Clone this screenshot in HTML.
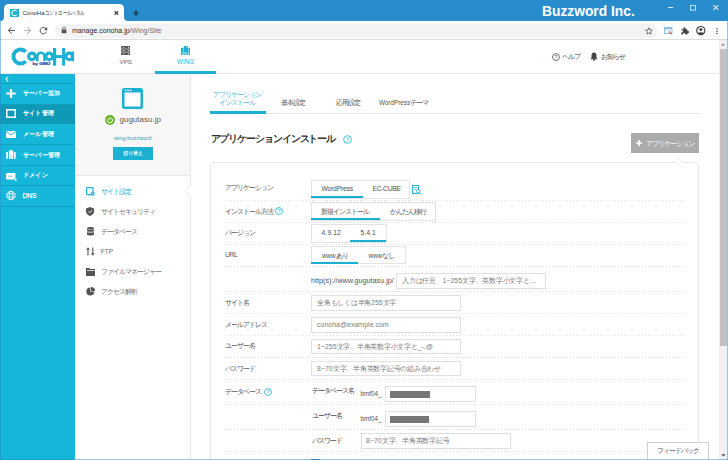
<!DOCTYPE html>
<html><head><meta charset="utf-8">
<style>
*{margin:0;padding:0;box-sizing:border-box}
html,body{width:728px;height:460px;overflow:hidden;background:#fff;font-family:"Liberation Sans",sans-serif;color:#444}
.a{position:absolute;white-space:nowrap}
.t6{font-size:7px;line-height:7px;letter-spacing:-1px}
i.l{letter-spacing:0}
i.l{font-style:normal;-webkit-text-stroke:0;font-size:6.3px}
svg{position:absolute;overflow:visible}
.dot{position:absolute;height:1px;background-image:linear-gradient(to right,#dedede 50%,transparent 50%);background-size:3px 1px}
.box{position:absolute;border:1px solid #e3e3e3;background:#fff}
.inp{position:absolute;border:1px solid #e0e0e0;background:#fff}
.ph{color:#808080;font-size:7px;line-height:7px;letter-spacing:-0.25px}
.ph i.l{font-size:7px}
</style></head><body>
<!-- ===== browser chrome ===== -->
<div class="a" style="left:0;top:0;width:728px;height:21px;background:#288dcd"></div>
<!-- tab -->
<div class="a" style="left:4px;top:4.3px;width:120px;height:17px;background:#fff;border-radius:4.5px 4.5px 0 0"></div>
<div class="a" style="left:0;top:15px;width:4px;height:6px;background:#fff"></div>
<div class="a" style="left:0;top:12px;width:4px;height:8.7px;background:#288dcd;border-radius:0 0 4px 0"></div>
<div class="a" style="left:124px;top:15px;width:5px;height:6px;background:#fff"></div>
<div class="a" style="left:124px;top:12px;width:5px;height:8.7px;background:#288dcd;border-radius:0 0 0 4px"></div>
<div class="a" style="left:10px;top:9px;width:9px;height:8px;background:#1eb3d5"></div>
<svg style="left:10px;top:9px" width="9" height="8" viewBox="0 0 9 8"><path d="M6.6 2.2A2.7 2.7 0 1 0 6.6 5.8" fill="none" stroke="#fff" stroke-width="1.1"/></svg>
<div class="a t6" style="left:22.5px;top:10px;color:#333;font-size:6px;letter-spacing:0">ConoHa<span style="display:inline-block;transform:scaleX(0.76);transform-origin:0 0;letter-spacing:-0.2px">コントロールパネル</span></div>
<svg style="left:114px;top:11px" width="5" height="4" viewBox="0 0 5 4"><path d="M0.6 0.3L4.2 3.7M4.2 0.3L0.6 3.7" stroke="#444" stroke-width="1.2"/></svg>
<svg style="left:132.5px;top:10px" width="6" height="6" viewBox="0 0 6 6"><path d="M3 0V6M0.3 3H5.7" stroke="#222" stroke-width="1.1"/></svg>
<div class="a" style="left:542px;top:3px;color:#fff;font-weight:bold;font-size:13.8px;line-height:18px">Buzzword Inc.</div>
<svg style="left:667.5px;top:6.8px" width="6" height="2"><path d="M0 0.5H5.2" stroke="#d6e7f4" stroke-width="1"/></svg>
<svg style="left:690px;top:5px" width="6" height="6"><rect x="0.5" y="0.5" width="5" height="4.6" fill="none" stroke="#d6e7f4" stroke-width="0.9"/></svg>
<svg style="left:713.3px;top:5px" width="6" height="5"><path d="M0.3 0.2L5.3 4.8M5.3 0.2L0.3 4.8" stroke="#e4eef7" stroke-width="1.1"/></svg>
<!-- toolbar -->
<div class="a" style="left:0;top:20.7px;width:728px;height:18.3px;background:#fff"></div>
<div class="a" style="left:0;top:39px;width:728px;height:1px;background:#dcdcdc"></div>
<svg style="left:7px;top:26px" width="9" height="9" viewBox="0 0 9 9"><path d="M1.3 4.4H7.9M4.6 1.2L1.3 4.4L4.6 7.6" fill="none" stroke="#555" stroke-width="1"/></svg>
<svg style="left:23px;top:26px" width="9" height="9" viewBox="0 0 9 9"><path d="M1.1 4.4H7.7M4.4 1.2L7.7 4.4L4.4 7.6" fill="none" stroke="#b5b5b5" stroke-width="1"/></svg>
<svg style="left:39px;top:26px" width="9" height="9" viewBox="0 0 9 9"><path d="M7.2 3.2A3.2 3.2 0 1 0 7.4 5.6" fill="none" stroke="#555" stroke-width="1"/><path d="M8.2 1V4.2H5Z" fill="#555"/></svg>
<div class="a" style="left:55px;top:23.5px;width:602px;height:14px;background:#f1f3f4;border-radius:7px"></div>
<svg style="left:61px;top:26.8px" width="6" height="7" viewBox="0 0 6 7"><path d="M1.6 3V2A1.4 1.4 0 0 1 4.4 2V3" fill="none" stroke="#555" stroke-width="0.9"/><rect x="0.6" y="2.8" width="4.8" height="3.4" rx="0.3" fill="#555"/></svg>
<div class="a" style="left:72px;top:26.5px;font-size:7px;line-height:8px;color:#2a2a2a">manage.conoha.jp<span style="color:#707070">/Wing/Site</span></div>
<svg style="left:645px;top:26.8px" width="8" height="8" viewBox="0 0 10 10"><path d="M5 0.9L6.2 3.7L9.2 3.9L6.9 5.9L7.6 8.9L5 7.3L2.4 8.9L3.1 5.9L0.8 3.9L3.8 3.7Z" fill="none" stroke="#555" stroke-width="1"/></svg>
<svg style="left:664px;top:27px" width="9" height="8" viewBox="0 0 9 8"><rect x="0.4" y="0.4" width="7.6" height="6.2" fill="#e3f0fb" stroke="#7fb6e6" stroke-width="0.8"/><rect x="0.4" y="0.4" width="7.6" height="1.8" fill="#8bbde9"/><path d="M5.2 4.6L7.8 7.2" stroke="#e8402a" stroke-width="1.1"/></svg>
<svg style="left:680.8px;top:27px" width="8" height="8" viewBox="0 0 8 8"><path d="M0.3 2.2H2.4V1.3A1.1 1.1 0 0 1 4.6 1.3V2.2H6.4V4H7A1.1 1.1 0 0 1 7 6.2H6.4V7.6H4.2V7A1.1 1.1 0 0 0 2 7V7.6H0.3V5.4H0.9A1.1 1.1 0 0 0 0.9 3.2H0.3Z" fill="#444"/></svg>
<svg style="left:696px;top:25.8px" width="10" height="10" viewBox="0 0 10 10"><circle cx="4.8" cy="4.6" r="4.1" fill="none" stroke="#444" stroke-width="1.2"/><circle cx="4.8" cy="3.5" r="1.5" fill="#444"/><path d="M2.2 7.2C2.8 5.8 6.8 5.8 7.4 7.2L6.5 8.2H3.1Z" fill="#444"/></svg>
<svg style="left:716px;top:27.5px" width="2" height="7"><circle cx="1" cy="0.8" r="0.75" fill="#444"/><circle cx="1" cy="3.2" r="0.75" fill="#444"/><circle cx="1" cy="5.6" r="0.75" fill="#444"/></svg>

<!-- ===== page header ===== -->
<div class="a" style="left:0;top:73px;width:720px;height:1px;background:#e6e6e6"></div>
<svg style="left:10px;top:44px" width="70" height="26" viewBox="0 0 70 26"><path d="M15.70 7.82A7.0 7.0 0 1 0 15.70 17.18" fill="none" stroke="#1cb1d2" stroke-width="3.9"/><circle cx="21.9" cy="12.399999999999999" r="3.3" fill="none" stroke="#1cb1d2" stroke-width="3.1"/><path d="M27.299999999999997 17.299999999999997V12.399999999999999A3.5 3.5 0 0 1 34.5 12.399999999999999V17.299999999999997" fill="none" stroke="#1cb1d2" stroke-width="2.6"/><circle cx="39.2" cy="12.399999999999999" r="3.3" fill="none" stroke="#1cb1d2" stroke-width="3.1"/><rect x="43" y="4" width="3.2" height="17.6" fill="#1cb1d2"/><rect x="52.1" y="4" width="3" height="17.6" fill="#1cb1d2"/><rect x="46" y="11.100000000000001" width="6.3" height="3" fill="#1cb1d2"/><circle cx="59.2" cy="12.399999999999999" r="3.3" fill="none" stroke="#1cb1d2" stroke-width="3.1"/><rect x="61.599999999999994" y="7.5" width="2.5" height="9.8" fill="#1cb1d2"/><text x="22.5" y="21.400000000000006" font-size="3.6" font-family="Liberation Sans" font-weight="bold" fill="#1d3d8f" stroke="#1d3d8f" stroke-width="0.15" textLength="18" lengthAdjust="spacingAndGlyphs">by GMO</text></svg>
<svg style="left:121px;top:46px" width="9" height="9" viewBox="0 0 9 9"><rect x="0" y="0" width="9" height="2.7" rx="0.6" fill="#555"/><rect x="0" y="3.2" width="9" height="2.6" rx="0.6" fill="#555"/><rect x="0" y="6.3" width="9" height="2.7" rx="0.6" fill="#555"/><path d="M1.2 1.35H4M1.2 4.5H4M1.2 7.65H4" stroke="#9a9a9a" stroke-width="0.9"/><circle cx="7.4" cy="1.35" r="0.55" fill="#fff"/><circle cx="7.4" cy="4.5" r="0.55" fill="#fff"/><circle cx="7.4" cy="7.65" r="0.55" fill="#fff"/></svg>
<div class="a" style="left:119.5px;top:58px;font-size:6.2px;line-height:7px;color:#666">VPS</div>
<svg style="left:181px;top:46px" width="9" height="9" viewBox="0 0 9 9"><rect x="0" y="2" width="2.3" height="6.8" fill="#1cb1d2"/><path d="M2.6 8.8V1A1 1 0 0 1 3.6 0H6A1 1 0 0 1 7 1V8.8Z" fill="#1cb1d2"/><rect x="7.4" y="2" width="1.6" height="6.8" fill="#1cb1d2"/><rect x="3.4" y="6.6" width="2.8" height="0.9" fill="#fff"/><rect x="5.2" y="1.1" width="0.9" height="0.9" fill="#dff4fa"/><rect x="0.9" y="6" width="0.6" height="2" fill="#bfeaf4"/><rect x="7.9" y="6" width="0.6" height="2" fill="#bfeaf4"/></svg>
<div class="a" style="left:177px;top:58px;font-size:6.3px;line-height:7px;color:#2ab3d3">WING</div>
<div class="a" style="left:155px;top:71px;width:61px;height:3px;background:#1cb1d2"></div>
<svg style="left:552px;top:52.5px" width="8" height="8" viewBox="0 0 8 8"><circle cx="4" cy="4" r="3.5" fill="none" stroke="#555" stroke-width="0.8"/><text x="4" y="6.3" font-size="6.2" text-anchor="middle" fill="#555" font-family="Liberation Sans">?</text></svg>
<div class="a t6" style="left:562px;top:53px;color:#444">ヘルプ</div>
<svg style="left:590px;top:52px" width="8" height="9" viewBox="0 0 8 9"><path d="M4 0.5C2 0.5 1.5 2 1.5 4V6L0.3 7.3H7.7L6.5 6V4C6.5 2 6 0.5 4 0.5Z" fill="#444"/><circle cx="4" cy="8" r="1" fill="#444"/></svg>
<div class="a t6" style="left:600.5px;top:53px;color:#444">お知らせ</div>


<!-- ===== sidebar ===== -->
<div class="a" style="left:0;top:74px;width:75px;height:386px;background:#15b6d8"></div>
<svg style="left:5px;top:76px" width="4" height="6" viewBox="0 0 4 6"><path d="M3.2 0.6L1 3L3.2 5.4" fill="none" stroke="#fff" stroke-width="1.1"/></svg>
<div class="a" style="left:1px;top:83px;width:74px;height:1px;background:#0f9fbf"></div>
<div class="a" style="left:0;top:104px;width:75px;height:20px;background:#0e9ab7"></div>
<div class="a" style="left:1px;top:103.5px;width:74px;height:1px;background:#0f9fbf"></div>
<div class="a" style="left:1px;top:144px;width:74px;height:1px;background:#0f9fbf"></div>
<div class="a" style="left:1px;top:165px;width:74px;height:1px;background:#0f9fbf"></div>
<div class="a" style="left:1px;top:185px;width:74px;height:1px;background:#0f9fbf"></div>
<div class="a" style="left:1px;top:206px;width:74px;height:1px;background:#0f9fbf"></div>
<svg style="left:6px;top:88.5px" width="10" height="9" viewBox="0 0 10 9"><path d="M5 0V9M0.3 4.5H9.7" stroke="#fff" stroke-width="2.2"/></svg>
<div class="a t6" style="left:22.5px;top:90px;color:#fff;font-size:6px;letter-spacing:0.4px;-webkit-text-stroke:0.2px">サーバー追加</div>
<svg style="left:6px;top:109px" width="10" height="9" viewBox="0 0 10 9"><rect x="0.8" y="0.8" width="8.4" height="7.4" fill="none" stroke="#fff" stroke-width="1.5"/></svg>
<div class="a t6" style="left:22.5px;top:110px;color:#fff;font-size:6px;letter-spacing:0.4px;-webkit-text-stroke:0.2px">サイト管理</div>
<svg style="left:6px;top:131px" width="10" height="7" viewBox="0 0 10 7"><rect x="0" y="0" width="10" height="7" rx="0.8" fill="#fff"/><path d="M0.5 0.8L5 4L9.5 0.8" fill="none" stroke="#15b6d8" stroke-width="0.9"/></svg>
<div class="a t6" style="left:22.5px;top:131px;color:#fff;font-size:6px;letter-spacing:0.4px;-webkit-text-stroke:0.2px">メール管理</div>
<svg style="left:6px;top:150px" width="10" height="9" viewBox="0 0 10 9"><rect x="0.1" y="2.1" width="1.9" height="6.6" fill="#fff"/><path d="M2.9 8.7V0.8A0.6 0.6 0 0 1 3.5 0.2H6.5A0.6 0.6 0 0 1 7.1 0.8V8.7Z" fill="#fff"/><rect x="7.8" y="2.1" width="1.9" height="6.6" fill="#fff"/><rect x="4.2" y="6.2" width="1.6" height="1.5" fill="#8fd8ea"/><rect x="0.5" y="6.5" width="1.1" height="1" fill="#9adcec"/><rect x="8.2" y="6.5" width="1.1" height="1" fill="#9adcec"/><rect x="5.2" y="1.1" width="1.2" height="0.5" fill="#bfe9f3"/></svg>
<div class="a t6" style="left:22.5px;top:151.5px;color:#fff;font-size:6px;letter-spacing:0.4px;-webkit-text-stroke:0.2px">サーバー管理</div>
<svg style="left:6px;top:172.5px" width="11" height="8" viewBox="0 0 11 8"><rect x="0" y="0" width="9.5" height="6.5" rx="0.8" fill="#fff"/><path d="M2 3.2H6" stroke="#15b6d8" stroke-width="0.7"/><circle cx="9.6" cy="6.6" r="1.3" fill="#fff" stroke="#15b6d8" stroke-width="0.5"/></svg>
<div class="a t6" style="left:22.5px;top:172px;color:#fff;font-size:6px;letter-spacing:0.4px;-webkit-text-stroke:0.2px">ドメイン</div>
<svg style="left:6px;top:191px" width="10" height="9" viewBox="0 0 10 9"><circle cx="5" cy="4.5" r="4.2" fill="none" stroke="#fff" stroke-width="1"/><ellipse cx="5" cy="4.5" rx="1.8" ry="4.2" fill="none" stroke="#fff" stroke-width="0.8"/><path d="M1 3H9M1 6H9" stroke="#fff" stroke-width="0.8"/></svg>
<div class="a" style="left:22.5px;top:192.5px;color:#fff;font-size:6.6px;line-height:6px;-webkit-text-stroke:0.25px">DNS</div>

<!-- ===== left panel ===== -->
<div class="a" style="left:75px;top:74px;width:115px;height:101px;background:#f7f7f7"></div>
<div class="a" style="left:75px;top:175px;width:115px;height:1px;background:#e8e8e8"></div>
<div class="a" style="left:190px;top:74px;width:1px;height:386px;background:#e6e6e6"></div>
<svg style="left:122px;top:88px" width="21" height="21" viewBox="0 0 21 21"><rect x="0" y="0" width="21" height="21" rx="2.5" fill="#1cb1d2"/><rect x="2.5" y="4.5" width="16" height="14" fill="#fff"/><circle cx="3.6" cy="2.4" r="0.8" fill="#fff"/><circle cx="6" cy="2.4" r="0.8" fill="#fff"/><circle cx="8.4" cy="2.4" r="0.8" fill="#fff"/></svg>
<svg style="left:105.2px;top:114.8px" width="10" height="10" viewBox="0 0 10 10"><circle cx="5" cy="5" r="4.95" fill="#62b51c"/><path d="M3.62 3.10A2.6 2.6 0 1 0 6.38 3.10" fill="none" stroke="#fff" stroke-width="0.95"/><rect x="4.5" y="1.9" width="1" height="3.4" fill="#fff"/></svg>
<div class="a" style="left:119.5px;top:115px;font-size:8px;line-height:10px;color:#5a5a5a">gugutasu.jp</div>
<div class="a" style="left:114px;top:135px;font-size:5.6px;line-height:6px;color:#2aa6c6">wing-buzzword</div>
<div class="a" style="left:113px;top:147px;width:40px;height:13px;background:#1cb1d2"></div>
<div class="a" style="left:113px;top:150.5px;width:40px;text-align:center;font-size:5px;line-height:5px;color:#fff;-webkit-text-stroke:0.1px">切り替え</div>
<!-- notch -->
<svg style="left:184px;top:185px" width="7" height="13" viewBox="0 0 7 13"><path d="M7 0L1 6.5L7 13Z" fill="#fff"/><path d="M7 0L1 6.5L7 13" fill="none" stroke="#e6e6e6" stroke-width="0.8"/></svg>
<svg style="left:85.5px;top:186.5px" width="9" height="9" viewBox="0 0 9 9"><rect x="0.6" y="0.6" width="6.5" height="7" rx="0.8" fill="none" stroke="#1cb1d2" stroke-width="1.2"/><circle cx="6.8" cy="6.8" r="2" fill="#1cb1d2"/><circle cx="6.8" cy="6.8" r="0.7" fill="#fff"/></svg>
<div class="a t6" style="left:101px;top:188px;color:#1cb1d2">サイト設定</div>
<svg style="left:86px;top:207px" width="8" height="9" viewBox="0 0 8 9"><path d="M4 0L8 1.5V4.5C8 6.8 6 8.3 4 9C2 8.3 0 6.8 0 4.5V1.5Z" fill="#555"/><path d="M2.3 4.4L3.6 5.7L5.9 3.2" fill="none" stroke="#fff" stroke-width="0.9"/></svg>
<div class="a t6" style="left:101px;top:208px;color:#737373">サイトセキュリティ</div>
<svg style="left:86.5px;top:227px" width="7" height="9" viewBox="0 0 7 9"><ellipse cx="3.5" cy="1.3" rx="3.5" ry="1.3" fill="#555"/><path d="M0 2.2C1 3 6 3 7 2.2V4.2C6 5 1 5 0 4.2Z" fill="#555"/><path d="M0 5C1 5.8 6 5.8 7 5V7.7C6 8.8 1 8.8 0 7.7Z" fill="#555"/></svg>
<div class="a t6" style="left:101px;top:228px;color:#737373">データベース</div>
<svg style="left:85.5px;top:247px" width="9" height="9" viewBox="0 0 9 9"><path d="M2 8.5V2.5M6.8 0.5V6.5" stroke="#555" stroke-width="1.1"/><path d="M0 2.8L2 0.2L4 2.8Z" fill="#555"/><path d="M4.8 6.2L6.8 8.8L8.8 6.2Z" fill="#555"/></svg>
<div class="a" style="left:100.8px;top:248.5px;font-size:6.6px;line-height:6px;color:#707070">FTP</div>
<svg style="left:86px;top:267.5px" width="9" height="8" viewBox="0 0 9 8"><path d="M0 0H3.5L4.2 1H9V8H0Z" fill="#555"/><rect x="1" y="2" width="7.5" height="0.7" fill="#fff"/></svg>
<div class="a t6" style="left:101px;top:268px;color:#737373">ファイルマネージャー</div>
<svg style="left:86px;top:287px" width="9" height="9" viewBox="0 0 9 9"><path d="M4.3 0.5V4.5H8.3A4 4 0 1 1 4.3 0.5Z" fill="#555"/><path d="M5 0A4 4 0 0 1 9 4H5Z" fill="#555"/></svg>
<div class="a t6" style="left:101px;top:288px;color:#737373">アクセス解析</div>


<!-- ===== main content ===== -->
<div class="a t6" style="left:213px;top:90.5px;color:#3db8d6">アプリケーション</div>
<div class="a t6" style="left:219px;top:99px;color:#3db8d6">インストール</div>
<div class="a" style="left:210px;top:113px;width:489px;height:1px;background:#e6e6e6"></div>
<div class="a" style="left:210px;top:110.5px;width:55.5px;height:3px;background:#1cb1d2"></div>
<div class="a t6" style="left:281px;top:99px;color:#555">基本設定</div>
<div class="a t6" style="left:336px;top:99px;color:#555">応用設定</div>
<div class="a t6" style="left:379px;top:99px;color:#555"><i class="l">WordPress</i>テーマ</div>
<div class="a" style="left:210.5px;top:133.5px;font-size:10px;line-height:10px;letter-spacing:-1.1px;font-weight:bold;color:#333">アプリケーションインストール</div>
<svg style="left:343px;top:134.5px" width="9" height="9" viewBox="0 0 9 9"><circle cx="4.5" cy="4.5" r="3.9" fill="none" stroke="#1cb1d2" stroke-width="0.8"/><text x="4.5" y="6.9" font-size="6.6" text-anchor="middle" fill="#1cb1d2" font-family="Liberation Sans">?</text></svg>
<div class="a" style="left:631px;top:133px;width:68px;height:19.5px;background:#ababab"></div>
<svg style="left:636px;top:140px" width="6" height="6" viewBox="0 0 6 6"><path d="M3 0V6M0 3H6" stroke="#fff" stroke-width="1.6"/></svg>
<div class="a t6" style="left:646px;top:139.5px;color:#fff">アプリケーション</div>

<!-- card -->
<div class="a" style="left:210px;top:162px;width:489px;height:320px;border:1px solid #e6e6e6;border-radius:5px;background:#fff"></div>
<svg style="left:675px;top:157.5px" width="8" height="5" viewBox="0 0 8 5"><path d="M0 5L4 1L8 5Z" fill="#fff"/><path d="M0 5L4 1L8 5" fill="none" stroke="#e6e6e6" stroke-width="0.8"/></svg>

<!-- row: application -->
<div class="a t6" style="left:225px;top:183.5px;color:#555">アプリケーション</div>
<div class="box" style="left:311px;top:180px;width:99px;height:18.5px"></div>
<div class="a" style="left:311px;top:196px;width:51.5px;height:2px;background:#1cb1d2"></div>
<div class="a" style="left:321.5px;top:185.5px;font-size:6.7px;line-height:6px;letter-spacing:-0.18px;color:#505050">WordPress</div>
<div class="a" style="left:372.5px;top:185.5px;font-size:6.7px;line-height:6px;letter-spacing:-0.3px;color:#505050">EC-CUBE</div>
<svg style="left:412px;top:184.5px" width="10" height="10" viewBox="0 0 10 10"><rect x="0.5" y="0.5" width="6" height="8" fill="none" stroke="#1cb1d2" stroke-width="0.9"/><path d="M2 2.5H5M2 4.3H4" stroke="#1cb1d2" stroke-width="0.7"/><circle cx="6.3" cy="6.3" r="1.8" fill="#fff" stroke="#1cb1d2" stroke-width="0.9"/><path d="M7.6 7.6L9.3 9.3" stroke="#1cb1d2" stroke-width="0.9"/></svg>
<div class="dot" style="left:225px;top:200px;width:460px"></div>

<!-- row: install method -->
<div class="a t6" style="left:225px;top:207.5px;color:#555">インストール方法</div>
<svg style="left:275px;top:207px" width="8" height="8" viewBox="0 0 8 8"><circle cx="4" cy="4" r="3.5" fill="none" stroke="#1cb1d2" stroke-width="0.8"/><text x="4" y="6.3" font-size="6.2" text-anchor="middle" fill="#1cb1d2" font-family="Liberation Sans">?</text></svg>
<div class="box" style="left:311px;top:202px;width:125px;height:18.5px"></div>
<div class="a" style="left:311px;top:218px;width:68.5px;height:2px;background:#1cb1d2"></div>
<div class="a t6" style="left:321px;top:208px;color:#555">新規インストール</div>
<div class="a t6" style="left:389.5px;top:208px;color:#555">かんたん移行</div>
<div class="dot" style="left:225px;top:222px;width:460px"></div>

<!-- row: version -->
<div class="a t6" style="left:225px;top:229px;color:#555">バージョン</div>
<div class="box" style="left:311px;top:224px;width:75.5px;height:18.5px"></div>
<div class="a" style="left:350px;top:240px;width:36px;height:2px;background:#1cb1d2"></div>
<div class="a" style="left:321.5px;top:230px;font-size:6.7px;line-height:6px;color:#505050;letter-spacing:0.15px">4.9.12</div>
<div class="a" style="left:360.5px;top:230px;font-size:6.7px;line-height:6px;color:#505050;letter-spacing:0.1px">5.4.1</div>
<div class="dot" style="left:225px;top:244px;width:460px"></div>

<!-- row: URL -->
<div class="a" style="left:225px;top:252px;font-size:6.8px;line-height:6px;letter-spacing:-0.4px;color:#555">URL</div>
<div class="box" style="left:311px;top:246px;width:94.5px;height:18px"></div>
<div class="a" style="left:311px;top:262px;width:47px;height:2px;background:#1cb1d2"></div>
<div class="a t6" style="left:322px;top:251.5px;color:#555"><i class="l">www</i>あり</div>
<div class="a t6" style="left:368.5px;top:251.5px;color:#555"><i class="l">www</i>なし</div>
<div class="dot" style="left:225px;top:266px;width:460px"></div>
<div class="a" style="left:311px;top:277px;color:#555;font-size:7.2px;line-height:7px">http<span>(s)</span>:/<span>/</span>www.gugutasu.jp/</div>
<div class="inp" style="left:396px;top:273px;width:150px;height:16px"></div>
<div class="a t6 ph" style="left:402px;top:277.3px">入力は任意　<i class="l">1~255</i>文字、英数字小文字と…</div>
<div class="dot" style="left:225px;top:291px;width:460px"></div>

<!-- row: site name -->
<div class="a t6" style="left:225px;top:298.5px;color:#555">サイト名</div>
<div class="inp" style="left:311px;top:295px;width:150px;height:16px"></div>
<div class="a t6 ph" style="left:317px;top:299.3px">全角もしくは半角<i class="l">255</i>文字</div>
<div class="dot" style="left:225px;top:313px;width:460px"></div>

<div class="a t6" style="left:225px;top:320.5px;color:#555">メールアドレス</div>
<div class="inp" style="left:311px;top:317px;width:150px;height:16px"></div>
<div class="a t6 ph" style="left:317px;top:320.8px"><i class="l">conoha@example.com</i></div>
<div class="dot" style="left:225px;top:335px;width:460px"></div>

<div class="a t6" style="left:225px;top:342px;color:#555">ユーザー名</div>
<div class="inp" style="left:311px;top:339px;width:150px;height:15px"></div>
<div class="a t6 ph" style="left:317px;top:342.8px"><i class="l">1~255</i>文字、半角英数字小文字と<i class="l">_-.@</i></div>
<div class="dot" style="left:225px;top:357px;width:460px"></div>

<div class="a t6" style="left:225px;top:364.5px;color:#555">パスワード</div>
<div class="inp" style="left:311px;top:361px;width:150px;height:15px"></div>
<div class="a t6 ph" style="left:317px;top:364.8px"><i class="l">8~70</i>文字、半角英数字記号の組み合わせ</div>
<div class="dot" style="left:225px;top:379px;width:460px"></div>

<!-- row: database -->
<div class="a t6" style="left:225px;top:387.5px;color:#555">データベース</div>
<svg style="left:263.5px;top:387.5px" width="8" height="8" viewBox="0 0 8 8"><circle cx="4" cy="4" r="3.5" fill="none" stroke="#1cb1d2" stroke-width="0.8"/><text x="4" y="6.3" font-size="6.2" text-anchor="middle" fill="#1cb1d2" font-family="Liberation Sans">?</text></svg>
<div class="a t6" style="left:311.5px;top:386.5px;color:#444">データベース名</div>
<div class="a t6" style="left:360.5px;top:390.3px;color:#555"><i class="l">bmf04_</i></div>
<div class="inp" style="left:385px;top:386px;width:91px;height:16px"></div>
<div class="a" style="left:390px;top:391px;width:39.5px;height:7px;background:#767676"></div>
<div class="dot" style="left:225px;top:404px;width:460px"></div>

<div class="a t6" style="left:311.5px;top:412px;color:#444">ユーザー名</div>
<div class="a t6" style="left:360.5px;top:415.2px;color:#555"><i class="l">bmf04_</i></div>
<div class="inp" style="left:385px;top:411px;width:91px;height:16px"></div>
<div class="a" style="left:390px;top:416px;width:38.5px;height:7px;background:#767676"></div>
<div class="dot" style="left:225px;top:429px;width:460px"></div>

<div class="a t6" style="left:311.5px;top:436.5px;color:#444">パスワード</div>
<div class="inp" style="left:361px;top:433px;width:150px;height:16px"></div>
<div class="a t6 ph" style="left:366px;top:436.8px"><i class="l">8~70</i>文字、半角英数字記号</div>
<div class="dot" style="left:225px;top:451px;width:460px"></div>

<!-- feedback -->
<div class="a" style="left:646.5px;top:442px;width:62px;height:20px;background:#fff;border:1px solid #cfcfcf"></div>
<div class="a t6" style="left:656.5px;top:447px;color:#555">フィードバック</div>

<!-- scrollbar -->
<div class="a" style="left:719px;top:40px;width:8px;height:420px;background:#f1f1f1"></div>
<div class="a" style="left:720px;top:48.5px;width:6.5px;height:297px;background:#c1c1c1"></div>
<svg style="left:721.3px;top:43.2px" width="4" height="3"><path d="M0 2.5L2 0.3L4 2.5Z" fill="#888"/></svg>
<svg style="left:721px;top:453.8px" width="5" height="3"><path d="M0.3 0.2L2.5 2.6L4.7 0.2Z" fill="#505050"/></svg>

<!-- window border -->
<div class="a" style="left:311px;top:459px;width:7px;height:1px;background:#45708f"></div>
<div class="a" style="left:317.5px;top:458.5px;width:2px;height:1.5px;background:#2fb0da"></div>
<div class="a" style="left:0;top:20px;width:1px;height:440px;background:rgba(43,136,200,0.5)"></div>
<div class="a" style="left:727px;top:20px;width:1px;height:440px;background:rgba(43,136,200,0.5)"></div>
<div class="a" style="left:0;top:459px;width:728px;height:1px;background:rgba(43,136,200,0.5)"></div>
</body></html>
